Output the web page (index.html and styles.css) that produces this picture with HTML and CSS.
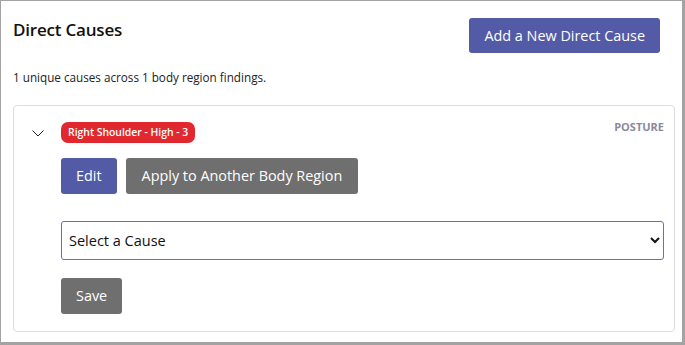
FILE: index.html
```html
<!DOCTYPE html>
<html lang="en">

<head>
    <meta charset="UTF-8">
    <meta name="viewport" content="width=device-width, initial-scale=1.0">
    <title>Direct Causes</title>
    <link rel="stylesheet" href="styles.css">
</head>

<body>
    <div class="panel">
        <div class="panel-header">
            <h2 class="panel-title">Direct Causes</h2>
            <button class="btn btn-primary">Add a New Direct Cause</button>
        </div>
        <p class="summary">1 unique causes across 1 body region findings.</p>

        <div class="cause-card">
            <div class="cause-head">
                <span class="toggle">
                    <svg width="12" height="7" viewBox="0 0 12 7">
                        <path d="M0.5 0.5 L6 6 L11.5 0.5" fill="none" stroke="#222" stroke-width="1"></path>
                    </svg>
                </span>
                <span class="badge badge-high">Right Shoulder - High - 3</span>
                <span class="category">POSTURE</span>
            </div>
            <div class="cause-body">
                <div class="actions">
                    <button class="btn btn-primary">Edit</button>
                    <button class="btn btn-secondary">Apply to Another Body Region</button>
                </div>
                <select class="cause-select">
                    <option>Select a Cause</option>
                </select>
                <button class="btn btn-secondary save-btn">Save</button>
            </div>
        </div>
    </div>
</body>

</html>
```

FILE: styles.css
```css
html,
body {
    margin: 0;
    font-family: 'Open Sans', sans-serif;
    background: #fff;
    color: #1a1a1a;
}

.panel {
    box-sizing: border-box;
    width: 685px;
    height: 345px;
    border-style: solid;
    border-color: #a3a3a3;
    border-width: 1px 3px 3px 1px;
    padding: 17px 7px 0 12px;
}

.panel-header {
    display: flex;
    justify-content: space-between;
    align-items: flex-start;
    padding-right: 15px;
}

.panel-title {
    margin: 0;
    font-size: 17px;
    line-height: 24px;
    font-weight: 600;
    letter-spacing: -0.2px;
    color: #111;
}

.summary {
    margin: 16px 0 20px;
    font-size: 11.7px;
    line-height: 16px;
    color: #222;
}

.btn {
    font-family: 'Open Sans', sans-serif;
    font-size: 14.4px;
    color: #fff;
    border: none;
    border-radius: 3px;
    padding: 0 15px;
    height: 36px;
    line-height: 36px;
    cursor: pointer;
}

.panel-header .btn {
    height: 35px;
    line-height: 35px;
}

.btn-primary {
    background: #535ba6;
}

.btn-secondary {
    background: #6f6f6f;
}

.actions .btn-secondary {
    padding: 0 16px;
}

.cause-card {
    border: 1px solid #dedce9;
    border-radius: 4px;
    padding: 16px 10px 17px 0;
}

.cause-head {
    display: flex;
    align-items: center;
}

.toggle {
    width: 47px;
    display: flex;
    justify-content: center;
    padding-top: 1px;
}

.badge {
    font-size: 10.4px;
    font-weight: 600;
    line-height: 21px;
    padding: 0 7px;
    border-radius: 7px;
    color: #fff;
}

.badge-high {
    background: #e2282f;
}

.category {
    margin-left: auto;
    align-self: flex-start;
    margin-top: -1px;
    font-size: 11px;
    line-height: 1;
    font-weight: 700;
    color: #8a8a9b;
}

.cause-body {
    margin-left: 47px;
}

.actions {
    display: flex;
    gap: 9px;
    margin-top: 15px;
}

.cause-select {
    display: block;
    box-sizing: border-box;
    width: 100%;
    height: 39px;
    margin-top: 27px;
    padding: 0 3px;
    font-family: 'Open Sans', sans-serif;
    font-size: 14.5px;
    color: #111;
    background: #fff;
    border: 1px solid #6d6db0;
    border-radius: 3px;
}

.save-btn {
    display: block;
    margin-top: 18px;
}
```
